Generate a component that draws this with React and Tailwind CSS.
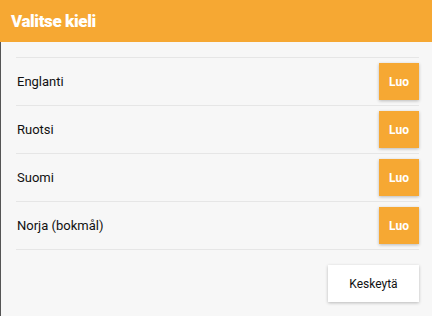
export default function App() {
  const languages = ['Englanti', 'Ruotsi', 'Suomi', 'Norja (bokmål)']

  return (
    <div className="w-[432px] h-[316px] flex flex-col bg-[#f7f7f7] overflow-hidden" style={{ fontFamily: 'Roboto, "Liberation Sans", sans-serif' }}>
      {/* Header */}
      <div className="h-[42px] shrink-0 bg-[#f6a833] flex items-center px-[11px]">
        <h1 className="text-[17px] font-black text-white leading-none tracking-[-0.4px]">Valitse kieli</h1>
      </div>

      {/* Body */}
      <div className="flex-1 flex flex-col border-l border-[#555]">
        <ul className="mt-[15px] ml-[15px] mr-[13px] border-t border-[#e6e6e6]">
          {languages.map((lang) => (
            <li key={lang} className="h-[48px] flex items-center justify-between border-b border-[#e6e6e6]">
              <span className="text-[13px] text-[#111] pl-px">{lang}</span>
              <button className="w-[40px] h-[37px] bg-[#f6a833] text-white text-[12px] font-bold shadow-[0_1px_3px_rgba(0,0,0,0.25)]">
                Luo
              </button>
            </li>
          ))}
        </ul>

        {/* Footer */}
        <div className="flex justify-end mr-[13px] mt-[15px]">
          <button className="w-[91px] h-[37px] bg-white text-[12px] text-[#111] shadow-[0_1px_3px_rgba(0,0,0,0.25)]">
            Keskeytä
          </button>
        </div>
      </div>
    </div>
  )
}
